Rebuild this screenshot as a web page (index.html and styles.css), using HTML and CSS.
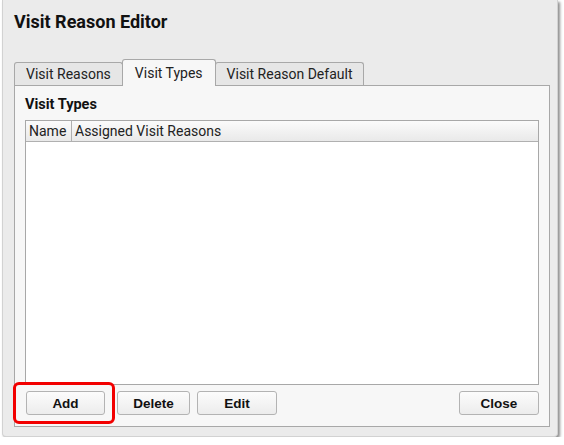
FILE: index.html
```html
<!DOCTYPE html>
<html lang="en">
<head>
    <meta charset="UTF-8">
    <meta name="viewport" content="width=device-width, initial-scale=1.0">
    <title>Visit Reason Editor</title>
    <link rel="stylesheet" href="styles.css">
</head>
<body>
    <div class="dialog">
        <h1 class="dialog-title">Visit Reason Editor</h1>

        <div class="tabs">
            <div class="tab">Visit Reasons</div>
            <div class="tab active">Visit Types</div>
            <div class="tab">Visit Reason Default</div>
        </div>

        <div class="panel">
            <div class="panel-label">Visit Types</div>
            <div class="grid">
                <div class="grid-head">
                    <div class="col col-name">Name</div>
                    <div class="col">Assigned Visit Reasons</div>
                </div>
                <div class="grid-body"></div>
            </div>
            <div class="actions">
                <button class="btn btn-add">Add<span class="highlight"></span></button>
                <button class="btn btn-delete">Delete</button>
                <button class="btn btn-edit">Edit</button>
                <button class="btn btn-close">Close</button>
            </div>
        </div>
    </div>
</body>
</html>
```

FILE: styles.css
```css
body {
    margin: 0;
    background: #ffffff;
    font-family: Roboto, 'Liberation Sans', sans-serif;
    color: #1a1a1a;
}
.dialog {
    margin-left: 2px;
    width: 556px;
    height: 437px;
    box-sizing: border-box;
    background: #ebebeb;
    border: 1px solid #d2d2d2;
    border-top: none;
    border-radius: 0 0 4px 4px;
    box-shadow: 2px 2px 3px rgba(0, 0, 0, 0.45);
    padding: 12px 0 0 11px;
}
.dialog-title {
    margin: 0;
    font-size: 18px;
    line-height: 20px;
    font-weight: bold;
    color: #111;
}
/* вкладки */
.tabs {
    display: flex;
    align-items: flex-end;
    margin-top: 27px;
    height: 26px;
}
.tab {
    height: 23px;
    box-sizing: border-box;
    padding: 3px 11px 0 11px;
    font-size: 14px;
    line-height: 17px;
    background: #e6e6e6;
    border: 1px solid #a8a8a8;
    border-bottom: none;
    border-radius: 3px 3px 0 0;
    color: #222;
}
.tab + .tab {
    margin-left: -1px;
}
.tab.active {
    height: 27px;
    padding: 5px 12px 0 12px;
    background: #f7f7f7;
    margin-bottom: -1px;
    position: relative;
    z-index: 1;
}
.panel {
    width: 536px;
    height: 342px;
    box-sizing: border-box;
    background: #f7f7f7;
    border: 1px solid #a8a8a8;
    padding: 10px 10px 0 10px;
    display: flex;
    flex-direction: column;
}
.panel-label {
    font-size: 14.5px;
    font-weight: bold;
    line-height: 18px;
    color: #111;
}
.grid {
    margin-top: 6px;
    height: 263px;
    border: 1px solid #a8a8a8;
    display: flex;
    flex-direction: column;
    background: #ffffff;
}
.grid-head {
    display: flex;
    height: 21px;
    box-sizing: border-box;
    background: linear-gradient(#fbfbfb, #e9e9e9);
    border-bottom: 1px solid #b0b0b0;
    font-size: 14px;
    line-height: 20px;
    color: #222;
}
.col {
    padding: 0 3px;
}
.col-name {
    width: 39px;
    border-right: 1px solid #b0b0b0;
}
.grid-body {
    flex: 1;
}
.actions {
    display: flex;
    margin-top: 6px;
    padding-left: 1px;
}
.btn {
    position: relative;
    height: 24px;
    box-sizing: border-box;
    background: linear-gradient(#fcfcfc, #ececec);
    border: 1px solid #b3b3b3;
    border-radius: 3px;
    font-family: 'Liberation Sans', Arial, sans-serif;
    font-size: 13.5px;
    font-weight: bold;
    color: #111;
    padding: 0;
}
.btn-add { width: 79px; }
.btn-delete { width: 73px; margin-left: 12px; }
.btn-edit { width: 80px; margin-left: 7px; }
.btn-close { width: 80px; margin-left: auto; }
/* красная рамка вокруг кнопки */
.highlight {
    position: absolute;
    left: -14px;
    top: -10px;
    width: 96px;
    height: 36px;
    border: 3px solid #f20000;
    border-radius: 6px;
}
```
